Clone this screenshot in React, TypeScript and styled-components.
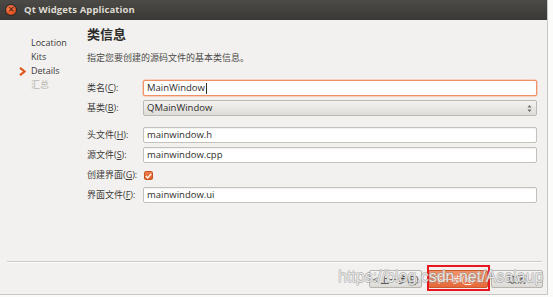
import styled, { createGlobalStyle, css } from "styled-components";

const GlobalStyle = createGlobalStyle`
  html, body {
    margin: 0;
    padding: 0;
    background: #fbfbfa;
  }
  body {
    font-family: "Open Sans", "Noto Sans CJK SC", sans-serif;
  }
`;

const cjk = `"Open Sans", "Noto Sans CJK SC", sans-serif`;

const Frame = styled.div`
  position: relative;
  width: 547px;
  height: 294px;
  display: flex;
  flex-direction: column;
  background: #f2f1f0;
  border-right: 1px solid #c9c7c3;
  border-bottom: 1px solid #c9c7c3;
  overflow: hidden;
`;

const TitleBar = styled.div`
  height: 20px;
  display: flex;
  align-items: center;
  gap: 8px;
  padding-left: 6px;
  background: linear-gradient(#4b4a46, #3a3935);
`;

const CloseButton = styled.div`
  width: 10px;
  height: 10px;
  border-radius: 50%;
  background: radial-gradient(circle at 40% 35%, #f6875a, #df4b1c 70%);
  box-shadow: 0 0 0 1px #2a2926;
  display: flex;
  align-items: center;
  justify-content: center;
  color: #5a1e08;
  font: bold 8px/1 "DejaVu Sans", sans-serif;
`;

const Title = styled.div`
  font: bold 9.5px/1 "Open Sans", sans-serif;
  color: #dfdbd2;
  letter-spacing: 0.1px;
`;

const Body = styled.div`
  flex: 1;
  display: flex;
`;

const Nav = styled.div`
  width: 87px;
  padding-top: 16px;
  display: flex;
  flex-direction: column;
`;

const NavItem = styled.div<{ $muted?: boolean; $current?: boolean }>`
  height: 14px;
  display: flex;
  align-items: center;
  padding-left: ${({ $current }) => ($current ? 19 : 31)}px;
  font: 9px/14px ${cjk};
  color: ${({ $muted }) => ($muted ? "#b9b6b0" : "#3c3b37")};
`;

const Arrow = styled.span`
  width: 12px;
  display: flex;
  align-items: center;
`;

const Content = styled.div`
  flex: 1;
  padding: 6px 10px 0 0;
  display: flex;
  flex-direction: column;
`;

const Heading = styled.div`
  font: bold 13px/16px ${cjk};
  color: #2e2d2a;
`;

const Subtitle = styled.div`
  margin-top: 10px;
  font: 9px/12px ${cjk};
  color: #4a4946;
`;

const Form = styled.div`
  margin-top: 16px;
  display: grid;
  grid-template-columns: 56px 1fr;
  row-gap: 4px;
  align-items: center;
`;

const Spacer = styled.div`
  grid-column: 1 / 3;
  height: 3px;
`;

const Label = styled.div`
  font: 9px/16px ${cjk};
  color: #3c3b37;
  white-space: nowrap;
  u {
    text-underline-offset: 1px;
  }
`;

const Field = styled.div<{ $focused?: boolean }>`
  height: 16px;
  box-sizing: border-box;
  display: flex;
  align-items: center;
  padding-left: 3px;
  background: #fff;
  border: 1px solid ${({ $focused }) => ($focused ? "#ee9068" : "#c4c1bb")};
  border-radius: 2px;
  ${({ $focused }) =>
    $focused
      ? css`box-shadow: 0 0 0 0.5px #f3b497;`
      : css`box-shadow: inset 0 1px 1px rgba(0, 0, 0, 0.06);`}
  font: 9.5px/1 "Open Sans", sans-serif;
  color: #2f2e2b;
`;

const Caret = styled.span`
  display: inline-block;
  width: 1px;
  height: 11px;
  margin-left: 1px;
  background: #2f2e2b;
`;

const Combo = styled.div`
  height: 16px;
  box-sizing: border-box;
  display: flex;
  align-items: center;
  justify-content: space-between;
  padding: 0 4px 0 3px;
  background: linear-gradient(#f4f3f1, #dedcd8);
  border: 1px solid #bdb9b3;
  border-radius: 2px;
  font: 9.5px/1 "Open Sans", sans-serif;
  color: #2f2e2b;
`;

const Checkbox = styled.div`
  width: 9px;
  height: 9px;
  margin: 3px 0 2px 1px;
  border-radius: 1.5px;
  background: linear-gradient(#f07d4b, #df5d27);
  border: 1px solid #c4531f;
  box-sizing: border-box;
  display: flex;
  align-items: center;
  justify-content: center;
`;

const Footer = styled.div`
  padding: 0 4px 6px 7px;
`;

const Separator = styled.div`
  height: 1px;
  margin-right: 1px;
  background: #cdcbc7;
  border-bottom: 1px solid #fbfbfa;
`;

const ButtonRow = styled.div`
  margin-top: 7px;
  display: flex;
  justify-content: flex-end;
`;

const Button = styled.div<{ $primary?: boolean; $width: number; $gap?: number }>`
  position: relative;
  width: ${({ $width }) => $width}px;
  margin-left: ${({ $gap }) => $gap ?? 0}px;
  height: 18px;
  box-sizing: border-box;
  display: flex;
  align-items: center;
  justify-content: center;
  border-radius: 2px;
  font: 9px/1 ${cjk};
  ${({ $primary }) =>
    $primary
      ? css`
          background: linear-gradient(#f3946a, #e6683a);
          border: 1px solid #c9582a;
          color: #fff4ee;
        `
      : css`
          background: linear-gradient(#f6f5f4, #dcdad6);
          border: 1px solid #b8b4ae;
          color: #3c3b37;
        `}
`;

const Highlight = styled.div`
  position: absolute;
  left: -2px;
  right: -3px;
  top: -6px;
  bottom: -4px;
  border: 2px solid #e8161e;
  pointer-events: none;
`;

const Watermark = styled.div`
  position: absolute;
  left: 338px;
  top: 267px;
  font: 16px/20px "Liberation Sans", sans-serif;
  color: rgba(255, 255, 255, 0.78);
  text-shadow:
    0.6px 0 0 rgba(140, 140, 140, 0.5),
    -0.6px 0 0 rgba(140, 140, 140, 0.5),
    0 0.6px 0 rgba(140, 140, 140, 0.5),
    0 -0.6px 0 rgba(140, 140, 140, 0.5);
  pointer-events: none;
  white-space: nowrap;
`;

const navItems = ["Location", "Kits", "Details", "汇总"];

export default function App() {
  return (
    <>
      <GlobalStyle />
      <Frame>
        <TitleBar>
          <CloseButton>×</CloseButton>
          <Title>Qt Widgets Application</Title>
        </TitleBar>
        <Body>
          <Nav>
            {navItems.map((item, i) => (
              <NavItem key={item} $muted={i === 3} $current={i === 2}>
                {i === 2 && (
                  <Arrow>
                    <svg width="7" height="9" viewBox="0 0 7 9">
                      <path d="M1 0.8 L5.6 4.5 L1 8.2" fill="none" stroke="#e2571e" strokeWidth="2.2" />
                    </svg>
                  </Arrow>
                )}
                {item}
              </NavItem>
            ))}
          </Nav>
          <Content>
            <Heading>类信息</Heading>
            <Subtitle>指定您要创建的源码文件的基本类信息。</Subtitle>
            <Form>
              <Label>
                类名(<u>C</u>):
              </Label>
              <Field $focused>
                MainWindow
                <Caret />
              </Field>
              <Label>
                基类(<u>B</u>):
              </Label>
              <Combo>
                QMainWindow
                <svg width="5" height="9" viewBox="0 0 5 9">
                  <path d="M0.5 3.5 L2.5 1 L4.5 3.5 Z M0.5 5.5 L2.5 8 L4.5 5.5 Z" fill="#6d6a65" />
                </svg>
              </Combo>
              <Spacer />
              <Label>
                头文件(<u>H</u>):
              </Label>
              <Field>mainwindow.h</Field>
              <Label>
                源文件(<u>S</u>):
              </Label>
              <Field>mainwindow.cpp</Field>
              <Label>
                创建界面(<u>G</u>):
              </Label>
              <div>
                <Checkbox>
                  <svg width="7" height="6" viewBox="0 0 7 6">
                    <path d="M0.8 3 L2.7 4.9 L6.2 0.9" fill="none" stroke="#fff" strokeWidth="1.4" />
                  </svg>
                </Checkbox>
              </div>
              <Label>
                界面文件(<u>F</u>):
              </Label>
              <Field>mainwindow.ui</Field>
            </Form>
          </Content>
        </Body>
        <Footer>
          <Separator />
          <ButtonRow>
            <Button $width={53}>&lt; 上一步(<u>B</u>)</Button>
            <Button $primary $width={60} $gap={6}>
              下一步(<u>N</u>) &gt;
              <Highlight />
            </Button>
            <Button $width={52} $gap={3}>取消</Button>
          </ButtonRow>
        </Footer>
        <Watermark>https://blog.csdn.net/Asalaup</Watermark>
      </Frame>
    </>
  );
}
